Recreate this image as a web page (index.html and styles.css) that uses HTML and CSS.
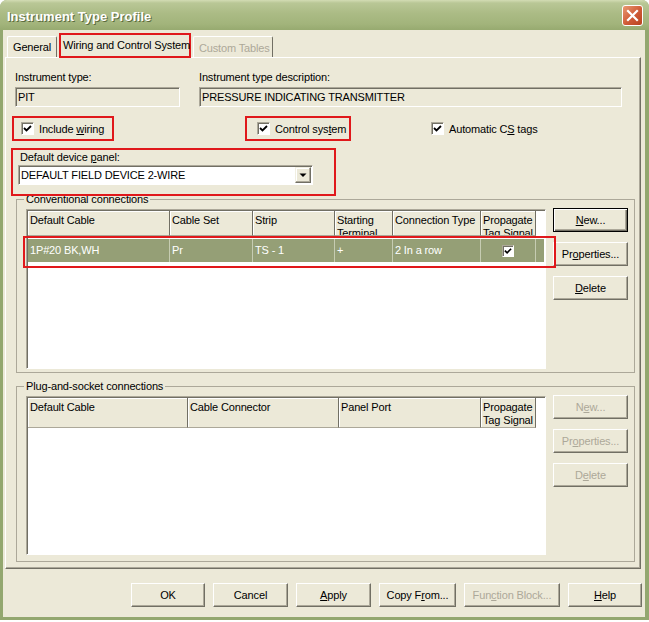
FILE: index.html
```html
<!DOCTYPE html>
<html lang="en">
<head>
  <meta charset="UTF-8">
  <title>Instrument Type Profile</title>
  <link rel="stylesheet" href="styles.css">
</head>
<body>

  <div class="window">
    <!-- Title bar -->
    <div class="titlebar">
      <span class="title">Instrument Type Profile</span>
      <span class="close">
        <svg viewBox="0 0 21 21" width="21" height="21">
          <path d="M6 6 L15 15 M15 6 L6 15" stroke="#fff" stroke-width="2.2" stroke-linecap="square"/>
        </svg>
      </span>
    </div>

    <div class="client">
      <!-- Tabs -->
      <div class="tabs">
        <div class="tab">General</div>
        <div class="tab active">Wiring and Control System</div>
        <div class="tab disabled">Custom Tables</div>
      </div>

      <div class="page">
        <div class="fields">
          <div class="field f-type">
            <label>Instrument type:</label>
            <div class="textbox">PIT</div>
          </div>
          <div class="field f-desc">
            <label>Instrument type description:</label>
            <div class="textbox">PRESSURE INDICATING TRANSMITTER</div>
          </div>
        </div>

        <div class="checks">
          <label class="check mark c-wiring">
            <span class="box"><svg viewBox="0 0 9 9" width="9" height="9"><polyline points="1,4 3.5,6.5 8,2" fill="none" stroke="#000" stroke-width="1.8"/></svg></span>
            <span>Include <u>w</u>iring</span>
          </label>
          <label class="check mark c-control">
            <span class="box"><svg viewBox="0 0 9 9" width="9" height="9"><polyline points="1,4 3.5,6.5 8,2" fill="none" stroke="#000" stroke-width="1.8"/></svg></span>
            <span>Control sys<u>t</u>em</span>
          </label>
          <label class="check c-auto">
            <span class="box"><svg viewBox="0 0 9 9" width="9" height="9"><polyline points="1,4 3.5,6.5 8,2" fill="none" stroke="#000" stroke-width="1.8"/></svg></span>
            <span>Automatic C<u>S</u> tags</span>
          </label>
        </div>

        <div class="device mark">
          <label>Default device <u>p</u>anel:</label>
          <div class="combo">
            <span>DEFAULT FIELD DEVICE 2-WIRE</span>
            <span class="drop">
              <svg viewBox="0 0 14 14" width="14" height="14"><polygon points="3.5,5.5 10.5,5.5 7,9" fill="#000"/></svg>
            </span>
          </div>
        </div>

        <!-- Conventional connections -->
        <fieldset class="group g-conv">
          <legend>Conventional connections</legend>
          <div class="list conv">
            <div class="lv-head">
              <div class="hc w142">Default Cable</div>
              <div class="hc w83">Cable Set</div>
              <div class="hc w82">Strip</div>
              <div class="hc w58">Starting<br>Terminal</div>
              <div class="hc w88">Connection Type</div>
              <div class="hc w55">Propagate<br>Tag Signal</div>
            </div>
            <div class="lv-row">
              <div class="rc w142">1P#20 BK,WH</div>
              <div class="rc w83">Pr</div>
              <div class="rc w82">TS - 1</div>
              <div class="rc w58">+</div>
              <div class="rc w88">2 In a row</div>
              <div class="rc w55 center">
                <span class="box small"><svg viewBox="0 0 9 9" width="8" height="8"><polyline points="1,4 3.5,6.5 8,2" fill="none" stroke="#000" stroke-width="1.9"/></svg></span>
              </div>
              <div class="rc fill"></div>
            </div>
            <div class="row-mark"></div>
          </div>
          <div class="side">
            <button type="button" class="btn default"><span><u>N</u>ew...</span></button>
            <button type="button" class="btn">Pr<u>o</u>perties...</button>
            <button type="button" class="btn"><u>D</u>elete</button>
          </div>
        </fieldset>

        <!-- Plug-and-socket connections -->
        <fieldset class="group g-plug">
          <legend>Plug-and-socket connections</legend>
          <div class="list plug">
            <div class="lv-head tall">
              <div class="hc w160">Default Cable</div>
              <div class="hc w151">Cable Connector</div>
              <div class="hc w142">Panel Port</div>
              <div class="hc w55">Propagate<br>Tag Signal</div>
            </div>
          </div>
          <div class="side">
            <button type="button" class="btn" disabled>N<u>e</u>w...</button>
            <button type="button" class="btn" disabled>Pr<u>o</u>perties...</button>
            <button type="button" class="btn" disabled>D<u>e</u>lete</button>
          </div>
        </fieldset>
      </div>

      <!-- Dialog buttons -->
      <div class="actions">
        <button type="button" class="btn b74">OK</button>
        <button type="button" class="btn b75">Cancel</button>
        <button type="button" class="btn b75"><u>A</u>pply</button>
        <button type="button" class="btn b77">Copy F<u>r</u>om...</button>
        <button type="button" class="btn b96" disabled>Fun<u>c</u>tion Block...</button>
        <button type="button" class="btn b74"><u>H</u>elp</button>
      </div>
    </div>
  </div>

</body>
</html>
```

FILE: styles.css
```css
/* Base */
* {
  box-sizing: border-box;
}
html, body {
  margin: 0;
  padding: 0;
}
body {
  width: 649px;
  height: 622px;
  overflow: hidden;
  background-color: #ffffff;
  font-family: "Liberation Sans", Arial, sans-serif;
  font-size: 11px;
  letter-spacing: -0.15px;
  color: #000;
}

/* Window frame */
.window {
  width: 649px;
  height: 620px;
  display: flex;
  flex-direction: column;
  background-color: #93a76f;
  border-radius: 7px 7px 0 0;
}

.titlebar {
  height: 30px;
  flex: none;
  display: flex;
  align-items: center;
  justify-content: space-between;
  padding: 2px 6px 0 7px;
  border-radius: 7px 7px 0 0;
  background: linear-gradient(#d3dcb4 0, #b9c796 3px, #abbb85 45%, #a2b47b 80%, #97aa70 100%);
}

.title {
  color: #fff;
  font-weight: bold;
  font-size: 13px;
  letter-spacing: 0;
  text-shadow: 1px 1px 0 #5b6b3e;
}

.close {
  width: 21px;
  height: 21px;
  margin-top: -2px;
  display: flex;
  border: 1px solid #fff;
  border-radius: 3px;
  background: linear-gradient(135deg, #e99a73, #cf5a36 55%, #b8431f);
}
.close svg {
  margin: -1px;
}

.client {
  flex: 1;
  margin: 0 4px 3px 3px;
  padding-top: 3px;
  display: flex;
  flex-direction: column;
  background-color: #ece9d8;
}

/* Tabs */
.tabs {
  height: 24px;
  display: flex;
  align-items: flex-end;
  padding-left: 4px;
}

.tab {
  height: 21px;
  width: 50px;
  display: flex;
  align-items: center;
  padding: 0 5px;
  white-space: nowrap;
  border: 1px solid;
  border-color: #fff #716f64 transparent #fff;
  border-bottom: none;
  border-radius: 2px 2px 0 0;
}

.tab.active {
  width: 132px;
  height: 25px;
  margin: 0 0 -1px 2px;
  padding: 0 2px 2px;
  border: 2px solid #e0181b;
  border-radius: 0;
  background-color: #ece9d8;
  position: relative;
  z-index: 1;
}

.tab.disabled {
  width: 80px;
  margin-left: 2px;
  padding-top: 2px;
  color: #aca899;
}

/* Tab page */
.page {
  width: 636px;
  height: 512px;
  margin-left: 2px;
  padding-top: 13px;
  border: 1px solid;
  border-color: #fff #716f64 #716f64 #fff;
  box-shadow: inset -1px -1px 0 #aca899;
}

.fields {
  display: flex;
  gap: 19px;
  margin-left: 9px;
}

.field label {
  display: block;
  line-height: 13px;
  margin-bottom: 3px;
}

.f-type { width: 165px; }
.f-desc { width: 423px; }

.textbox {
  height: 20px;
  padding: 3px 0 0 2px;
  line-height: 13px;
  border: 1px solid;
  border-color: #aca899 #fff #fff #aca899;
  box-shadow: inset 1px 1px 0 #716f64;
}

/* Checkboxes */
.checks {
  height: 25px;
  margin-top: 9px;
  display: flex;
  align-items: center;
}

.check {
  height: 25px;
  display: flex;
  align-items: center;
  gap: 5px;
  white-space: nowrap;
}

/* red annotation frames */
.mark {
  border: 2px solid #e0181b;
}

.c-wiring {
  width: 102px;
  margin-left: 6px;
  padding-left: 7px;
}
.c-control {
  width: 106px;
  margin-left: 131px;
  padding-left: 10px;
}
.c-auto {
  margin-left: 80px;
}

.box {
  width: 13px;
  height: 13px;
  flex: none;
  display: flex;
  align-items: center;
  justify-content: center;
  background-color: #fff;
  border: 1px solid;
  border-color: #aca899 #fff #fff #aca899;
  box-shadow: inset 1px 1px 0 #716f64;
}
.box.small {
  width: 12px;
  height: 12px;
}

/* Device panel */
.device {
  width: 325px;
  height: 48px;
  margin: 7px 0 0 5px;
  padding: 1px 0 0 5px;
  position: relative;
  z-index: 1;
}

.device label {
  display: block;
  padding-left: 2px;
  line-height: 13px;
  margin-bottom: 1px;
}

.combo {
  width: 295px;
  height: 20px;
  display: flex;
  align-items: center;
  justify-content: space-between;
  padding: 0 1px 0 2px;
  background-color: #fff;
  border: 1px solid;
  border-color: #aca899 #fff #fff #aca899;
  box-shadow: inset 1px 1px 0 #716f64;
}

.drop {
  width: 16px;
  height: 16px;
  display: flex;
  align-items: center;
  justify-content: center;
  background-color: #ece9d8;
  border: 1px solid;
  border-color: #f1efe2 #716f64 #716f64 #f1efe2;
  box-shadow: inset -1px -1px 0 #aca899, inset 1px 1px 0 #fff;
}

/* Group boxes */
.group {
  width: 619px;
  margin: 0 0 0 10px;
  padding: 3px 6px 3px 9px;
  display: flex;
  border: 1px solid #aca899;
}

.group legend {
  margin-left: -2px;
  padding: 0 2px;
  line-height: 13px;
}

.g-conv {
  margin-top: -3px;
}
.g-plug {
  margin-top: 7px;
  padding-bottom: 6px;
}

/* List views */
.list {
  width: 520px;
  padding: 1px;
  position: relative;
  background-color: #fff;
  border: 1px solid;
  border-color: #aca899 #fff #fff #aca899;
  box-shadow: inset 1px 1px 0 #716f64;
}
.list.conv { height: 160px; }
.list.plug { height: 159px; }

.lv-head {
  height: 25px;
  display: flex;
  overflow: hidden;
}
.lv-head.tall {
  height: 30px;
}

.hc {
  flex: none;
  padding: 3px 0 0 2px;
  line-height: 13px;
  white-space: nowrap;
  background-color: #ece9d8;
  border-right: 1px solid #716f64;
  border-bottom: 1px solid #aca899;
  box-shadow: inset 1px 1px 0 #fff;
  overflow: hidden;
}

.w142 { width: 142px; }
.w83 { width: 83px; }
.w82 { width: 82px; }
.w58 { width: 58px; }
.w88 { width: 88px; }
.w55 { width: 55px; }
.w160 { width: 160px; }
.w151 { width: 151px; }

.lv-row {
  height: 23px;
  margin-top: 3px;
  display: flex;
  background-color: #959f76;
  color: #fff;
}

.rc {
  flex: none;
  padding-left: 2px;
  line-height: 23px;
  border-right: 1px solid #c6ccb2;
  white-space: nowrap;
}
.rc.center {
  display: flex;
  align-items: center;
  justify-content: center;
  padding-left: 0;
}
.rc.fill {
  flex: 1;
  border-right: none;
}

.row-mark {
  position: absolute;
  left: -4px;
  top: 26px;
  width: 533px;
  height: 32px;
  border: 2px solid #e0181b;
}

/* Buttons */
.side {
  width: 75px;
  margin: -1px 0 0 7px;
  display: flex;
  flex-direction: column;
  gap: 10px;
}

.btn {
  height: 24px;
  padding: 0;
  display: flex;
  align-items: center;
  justify-content: center;
  font-family: inherit;
  font-size: 11px;
  letter-spacing: inherit;
  white-space: nowrap;
  color: #000;
  background-color: #ece9d8;
  border: 1px solid;
  border-color: #fff #716f64 #716f64 #fff;
  border-radius: 0;
  box-shadow: inset -1px -1px 0 #aca899;
}

.btn.default {
  border-color: #000;
  box-shadow: inset 1px 1px 0 #fff, inset -1px -1px 0 #716f64, inset -2px -2px 0 #aca899;
}

.btn:disabled {
  color: #aca899;
}

.actions {
  margin-top: 14px;
  padding-right: 3px;
  display: flex;
  justify-content: flex-end;
  gap: 8px;
}

.b74 { width: 74px; }
.b75 { width: 75px; }
.b77 { width: 77px; }
.b96 { width: 96px; }
```
